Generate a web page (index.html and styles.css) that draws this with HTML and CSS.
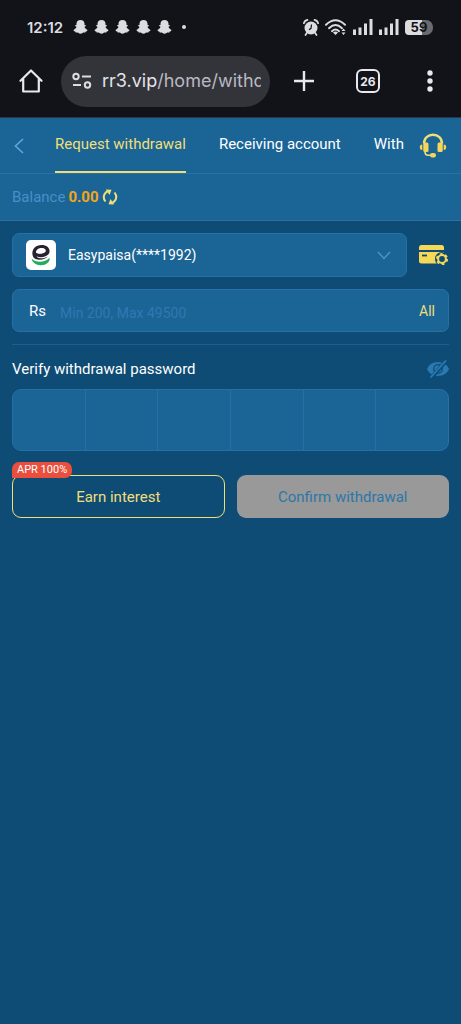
FILE: index.html
```
<!DOCTYPE html>
<html lang="en">
<head>
    <meta charset="UTF-8">
    <meta name="viewport" content="width=device-width, initial-scale=1.0">
    <title>Request withdrawal</title>
    <link rel="stylesheet" href="styles.css">
</head>
<body>
    <!-- shared shapes -->
    <svg class="sprite" width="0" height="0" aria-hidden="true">
        <symbol id="ghost" viewBox="0 0 14 14">
            <path d="M7 0C4.500 0 3 1.600 3 3.700V5L1.800 4.900L1.700 6L3 6.800C2.700 8.200 1.600 9.300 0 10C.2 11.300 1.200 11.600 2 11.800L2.400 12.700C3.600 12.500 4.300 12.500 5 13.100C6 14 8 14 9 13.100C9.700 12.500 10.400 12.500 11.600 12.700L12 11.800C12.800 11.600 13.800 11.300 14 10C12.400 9.300 11.300 8.200 11 6.800L12.300 6L12.200 4.900L11 5V3.700C11 1.600 9.500 0 7 0Z"/>
        </symbol>
        <symbol id="signal" viewBox="0 0 20 16">
            <path d="M0 10.500h3v5.500H0zM5.500 8.500h3v7.500h-3zM11 4.500h3v11.500h-3zM16.500 0h3v16h-3z"/>
        </symbol>
    </svg>

    <div class="status-bar">
        <span class="time">12:12</span>
        <div class="notifications">
            <svg><use href="#ghost"/></svg>
            <svg><use href="#ghost"/></svg>
            <svg><use href="#ghost"/></svg>
            <svg><use href="#ghost"/></svg>
            <svg><use href="#ghost"/></svg>
            <span class="dot"></span>
        </div>
        <div class="indicators">
            <svg class="alarm" viewBox="0 0 16 17">
                <circle cx="8" cy="9" r="6.500" fill="#dcdde0"/>
                <path d="M.9 4.300Q1.600 1.500 4.500.9M15.100 4.300Q14.400 1.500 11.500.9M3.800 14l-1.300 2M12.200 14l1.300 2" fill="none" stroke="#dcdde0" stroke-width="1.700" stroke-linecap="round"/>
                <path d="M8.500 5.500L8 9.300L6 10.800" fill="none" stroke="#121319" stroke-width="1.200"/>
            </svg>
            <svg class="wifi" viewBox="0 0 22 17">
                <path d="M1 5.800Q10.500-3.200 20 5.800M4 9.200Q10.500 3 17 9.200M7 12.200Q10.500 9 14 12.200" fill="none" stroke="#dcdde0" stroke-width="1.900" stroke-linecap="round"/>
                <path d="M8 13.500Q10.500 11.500 13 13.500L10.500 16ZM16.500 12l2-2.500 2 2.500zM16.500 13.500h4l-2 2.500z" fill="#dcdde0"/>
            </svg>
            <svg class="signal"><use href="#signal"/></svg>
            <svg class="signal"><use href="#signal"/></svg>
            <span class="battery">59</span>
        </div>
    </div>

    <div class="browser-bar">
        <button type="button" class="bar-button" aria-label="Home">
            <svg width="24" height="24" viewBox="0 0 24 24" fill="none" stroke="#e8e8ee" stroke-width="2.200" stroke-linejoin="round" stroke-linecap="round"><path d="M1.500 11.800L12 1.500L22.500 11.800M4.200 9.500V22.500H19.800V9.500"/></svg>
        </button>
        <button type="button" class="address">
            <svg width="20" height="18" viewBox="0 0 20 18" fill="none" stroke="#dcdce2" stroke-width="2"><circle cx="4" cy="4.500" r="2.700"/><circle cx="15.500" cy="13" r="2.700"/><path d="M10 4.500h9M1 13h8"/></svg>
            <span class="url">rr3.vip<span class="path">/home/withd</span></span>
        </button>
        <button type="button" class="bar-button" aria-label="New tab">
            <svg width="20" height="20" viewBox="0 0 20 20" fill="none" stroke="#e8e8ee" stroke-width="2.400"><path d="M10 0v20M0 10h20"/></svg>
        </button>
        <button type="button" class="bar-button tab-count"><span>26</span></button>
        <button type="button" class="bar-button" aria-label="Menu">
            <svg width="6" height="22" viewBox="0 0 6 22" fill="#e8e8ee"><circle cx="3" cy="3" r="2.700"/><circle cx="3" cy="11" r="2.700"/><circle cx="3" cy="19" r="2.700"/></svg>
        </button>
    </div>

    <header class="header">
        <a href="#" class="back" aria-label="Back">
            <svg width="10" height="16" viewBox="0 0 10 16" fill="none" stroke="#5aa6e0" stroke-width="1.700"><path d="M9 1L1.500 8L9 15"/></svg>
        </a>
        <nav class="tabs">
            <a href="#" class="active">Request withdrawal</a>
            <a href="#">Receiving account</a>
            <a href="#">With</a>
        </nav>
        <a href="#" class="support" aria-label="Support">
            <svg width="28" height="26" viewBox="0 0 28 26">
                <path d="M5 10.500C5 5 9 1.800 14 1.800S23 5 23 10.500" fill="none" stroke="#efdf79" stroke-width="2.400"/>
                <path d="M6 18.500Q6 22.200 9 22.200H14" fill="none" stroke="#efdf79" stroke-width="1.600"/>
                <g fill="#f6d658"><rect x="4.300" y="9.500" width="5.200" height="9.500" rx="1.500"/><rect x="18.500" y="9.500" width="5.200" height="9.500" rx="1.500"/><rect x="11" y="20" width="6" height="4.500" rx="2.200"/><path d="M3.300 11.500Q.8 11.500.8 14.300T3.300 17zM24.700 11.500Q27.200 11.500 27.200 14.300T24.700 17z"/></g>
            </svg>
        </a>
    </header>

    <div class="balance">
        <span>Balance</span>
        <strong>0.00</strong>
        <button type="button" class="refresh" aria-label="Refresh balance">
            <svg width="16" height="16" viewBox="0 0 16 16">
                <path d="M3.500 12.500Q-.3 7.500 4 3.300L5.500 2.300" fill="none" stroke="#efdf79" stroke-width="2"/>
                <path d="M12.500 3.500Q16.300 8.500 12 12.700L10.500 13.700" fill="none" stroke="#efdf79" stroke-width="2"/>
                <path d="M3.800.5L9.500.8L7.500 6ZM12.200 15.500L6.500 15.200L8.500 10Z" fill="#efdf79"/>
            </svg>
        </button>
    </div>

    <main>
        <form>
            <div class="account-row">
                <div class="account">
                    <svg class="bank-logo" viewBox="0 0 30 30">
                        <rect width="30" height="30" rx="5" fill="#fff"/>
                        <path fill-rule="evenodd" d="M7.500 17.500C4.500 12.500 7.500 5 15.500 5C21 5 24 8 23.500 12C23 16.500 15 18.500 10.500 16.300C12 19 18 19 22 16.300C19 20.300 10.500 21 7.500 17.500ZM10 12.300C10 14.500 19.800 14.500 19.800 10.800C19.800 6.500 10 7.500 10 12.300Z" fill="#28242f"/>
                        <path d="M10.500 12C12 7.500 18.500 7.300 19 10.700C18.500 13.500 12.500 14.300 10.500 12Z" fill="#fff"/>
                        <path d="M5.700 18.500C9.500 23 19 23 23.500 17.700C24.500 22 19.500 25.500 14.500 25.200C10 25 6 22.500 5.700 18.500Z" fill="#22ad5c"/>
                    </svg>
                    <select aria-label="Receiving account">
                        <option>Easypaisa(****1992)</option>
                    </select>
                    <svg class="arrow" width="14" height="9" viewBox="0 0 14 9" fill="none" stroke="#4b95cc" stroke-width="1.400"><path d="M1 1L7 7.500L13 1"/></svg>
                </div>
                <a href="#" class="manage" aria-label="Manage accounts">
                    <svg width="30" height="22" viewBox="0 0 30 22">
                        <path d="M0 6V3.500Q0 1 2.500 1H22.500Q25 1 25 3.500V6ZM0 8H25V9H19.500L16.500 12V16L18 19.500H2.500Q0 19.500 0 17Z" fill="#f5d858"/>
                        <path d="M3 11.500h5" stroke="#0f4c75" stroke-width="1.800"/>
                        <circle cx="23" cy="15" r="7" fill="#0f4c75"/>
                        <circle cx="23" cy="15" r="5.200" fill="none" stroke="#f5d858" stroke-width="1.800" stroke-dasharray="2.700 2.745"/>
                        <circle cx="23" cy="15" r="3.900" fill="none" stroke="#f5d858" stroke-width="2"/>
                    </svg>
                </a>
            </div>

            <div class="amount">
                <label for="amount">Rs</label>
                <input type="text" id="amount" name="amount" placeholder="Min 200, Max 49500">
                <button type="button">All</button>
            </div>

            <div class="password-head">
                <label for="pin1">Verify withdrawal password</label>
                <button type="button" aria-label="Show password">
                    <svg width="22" height="18" viewBox="0 0 22 18">
                        <path d="M0 9Q3 2 11 2T22 9Q19 16 11 16T0 9Z" fill="#2979b2"/>
                        <circle cx="11" cy="9" r="4.300" fill="none" stroke="#0f4c75" stroke-width="1.300"/>
                        <path d="M4 18L20 0" stroke="#0f4c75" stroke-width="4"/>
                        <path d="M3.500 17.500L19 .5" stroke="#2979b2" stroke-width="1.800"/>
                    </svg>
                </button>
            </div>
            <div class="password">
                <input type="password" id="pin1" maxlength="1">
                <input type="password" maxlength="1" aria-label="Digit 2">
                <input type="password" maxlength="1" aria-label="Digit 3">
                <input type="password" maxlength="1" aria-label="Digit 4">
                <input type="password" maxlength="1" aria-label="Digit 5">
                <input type="password" maxlength="1" aria-label="Digit 6">
            </div>

            <div class="actions">
                <button type="button" class="earn">Earn interest<span class="badge">APR 100%</span></button>
                <button type="submit" class="confirm" disabled>Confirm withdrawal</button>
            </div>
        </form>
    </main>
</body>
</html>
```

FILE: styles.css
```
* {
    box-sizing: border-box;
}

body {
    margin: 0;
    min-height: 100vh;
    background-color: #0f4c75;
    color: #ffffff;
    font-family: Roboto, "Liberation Sans", sans-serif;
    font-size: 15px;
}

a {
    color: inherit;
    text-decoration: none;
}

button,
input,
select {
    font: inherit;
    color: inherit;
    background: none;
    border: none;
    padding: 0;
    margin: 0;
    outline: none;
}

svg {
    display: block;
    flex-shrink: 0;
}

.sprite {
    position: absolute;
}

/* phone status bar */
.status-bar {
    display: flex;
    align-items: center;
    height: 56px;
    padding: 0 28px 2px 27px;
    background-color: #121319;
    color: #dcdde0;
}

.time {
    font-family: Inter, sans-serif;
    font-size: 15px;
    font-weight: 600;
}

.notifications {
    display: flex;
    align-items: center;
    gap: 6px;
    margin-left: 10px;
}

.notifications svg {
    width: 15px;
    height: 14px;
    fill: #dcdde0;
}

.dot {
    width: 4px;
    height: 4px;
    margin-left: 4px;
    border-radius: 50%;
    background-color: #dcdde0;
}

.indicators {
    display: flex;
    align-items: center;
    gap: 6px;
    margin-left: auto;
}

.alarm {
    width: 16px;
    height: 17px;
}

.wifi {
    width: 22px;
    height: 17px;
}

.signal {
    width: 20px;
    height: 16px;
    fill: #dcdde0;
}

.battery {
    width: 28px;
    border-radius: 4px 7px 7px 4px;
    background: linear-gradient(to right, #dcdde0 60%, #6a6b70 60%);
    color: #121319;
    font-family: Inter, sans-serif;
    font-size: 13px;
    font-weight: 700;
    line-height: 15px;
    text-align: center;
}

/* browser toolbar */
.browser-bar {
    display: flex;
    align-items: center;
    height: 62px;
    padding: 0 28px 11px 19px;
    background-color: #121319;
    border-bottom: 1px solid #27374c;
}

.bar-button {
    display: flex;
    align-items: center;
    justify-content: center;
    flex-shrink: 0;
}

.address {
    display: flex;
    align-items: center;
    flex: 1;
    gap: 10px;
    min-width: 0;
    height: 51px;
    margin: 0 24px 0 18px;
    padding: 0 9px 0 11px;
    border-radius: 26px;
    background-color: #33343a;
}

.url {
    flex: 1;
    overflow: hidden;
    color: #e4e4e9;
    font-family: Inter, sans-serif;
    font-size: 18px;
    line-height: 26px;
    text-align: left;
    white-space: nowrap;
}

.path {
    color: #b9b9c2;
}

.tab-count {
    width: 24px;
    height: 24px;
    margin: 0 47px 0 42px;
    border: 2px solid #e8e8ee;
    border-radius: 6px;
    color: #e8e8ee;
    font-family: Inter, sans-serif;
    font-size: 12px;
    font-weight: 700;
}

/* page header */
.header {
    display: flex;
    height: 56px;
    padding: 0 14px;
    background-color: #1b6496;
    border-bottom: 1px solid #2a70a3;
}

.back,
.support {
    display: flex;
    align-items: center;
    flex-shrink: 0;
}

.tabs {
    display: flex;
    flex: 1;
    gap: 33px;
    min-width: 0;
    margin: 0 12px 0 31px;
    overflow: hidden;
    white-space: nowrap;
}

.tabs a {
    border-bottom: 2px solid transparent;
    line-height: 53px;
}

.tabs .active {
    color: #efdf79;
    border-bottom-color: #efdf79;
}

.balance {
    display: flex;
    align-items: center;
    gap: 3px;
    height: 47px;
    padding: 0 12px;
    background-color: #1b6496;
    border-bottom: 1px solid #2a70a3;
    color: #4690c8;
}

.balance strong {
    color: #f3a51c;
}

/* withdrawal form */
form {
    padding: 12px;
}

.account-row {
    display: flex;
    align-items: center;
    gap: 12px;
}

.account {
    position: relative;
    flex: 1;
}

.account select {
    display: block;
    width: 100%;
    height: 44px;
    padding: 0 36px 0 55px;
    appearance: none;
    border: 1px solid #2471a7;
    border-radius: 7px;
    background-color: #1b6496;
    font-size: 14px;
}

.bank-logo {
    position: absolute;
    top: 7px;
    left: 14px;
    width: 30px;
    height: 30px;
    pointer-events: none;
}

.arrow {
    position: absolute;
    top: 18px;
    right: 16px;
    pointer-events: none;
}

.amount {
    display: flex;
    align-items: center;
    height: 43px;
    margin: 12px 0;
    padding: 0 13px 0 16px;
    border: 1px solid #2471a7;
    border-radius: 7px;
    background-color: #1b6496;
}

.amount input {
    flex: 1;
    min-width: 0;
    height: 41px;
    margin-left: 14px;
    padding-top: 4px;
    font-size: 14px;
}

.amount input::placeholder {
    color: #2c7ab2;
}

.amount button {
    color: #efdf79;
    font-size: 14px;
}

.password-head {
    display: flex;
    align-items: center;
    justify-content: space-between;
    height: 45px;
    padding-top: 4px;
    border-top: 1px solid #1d608f;
}

.password {
    display: flex;
    height: 62px;
    border: 1px solid #2471a7;
    border-radius: 9px;
    background-color: #1b6496;
    overflow: hidden;
}

.password input {
    flex: 1;
    min-width: 0;
    font-size: 24px;
    text-align: center;
}

.password input + input {
    border-left: 1px solid #2471a7;
}

.actions {
    display: grid;
    grid-template-columns: 1fr 1fr;
    gap: 12px;
    margin-top: 24px;
}

.actions button {
    position: relative;
    height: 43px;
    border-radius: 9px;
}

.earn {
    border: 1px solid #efdf79;
    color: #efdf79;
}

.confirm {
    background-color: #999999;
    color: #2d77a8;
}

.badge {
    position: absolute;
    top: -14px;
    left: -1px;
    padding: 0 5px;
    border-radius: 7px 7px 7px 0;
    background-color: #ea4e3d;
    color: #ffffff;
    font-size: 11px;
    line-height: 16px;
}
```
